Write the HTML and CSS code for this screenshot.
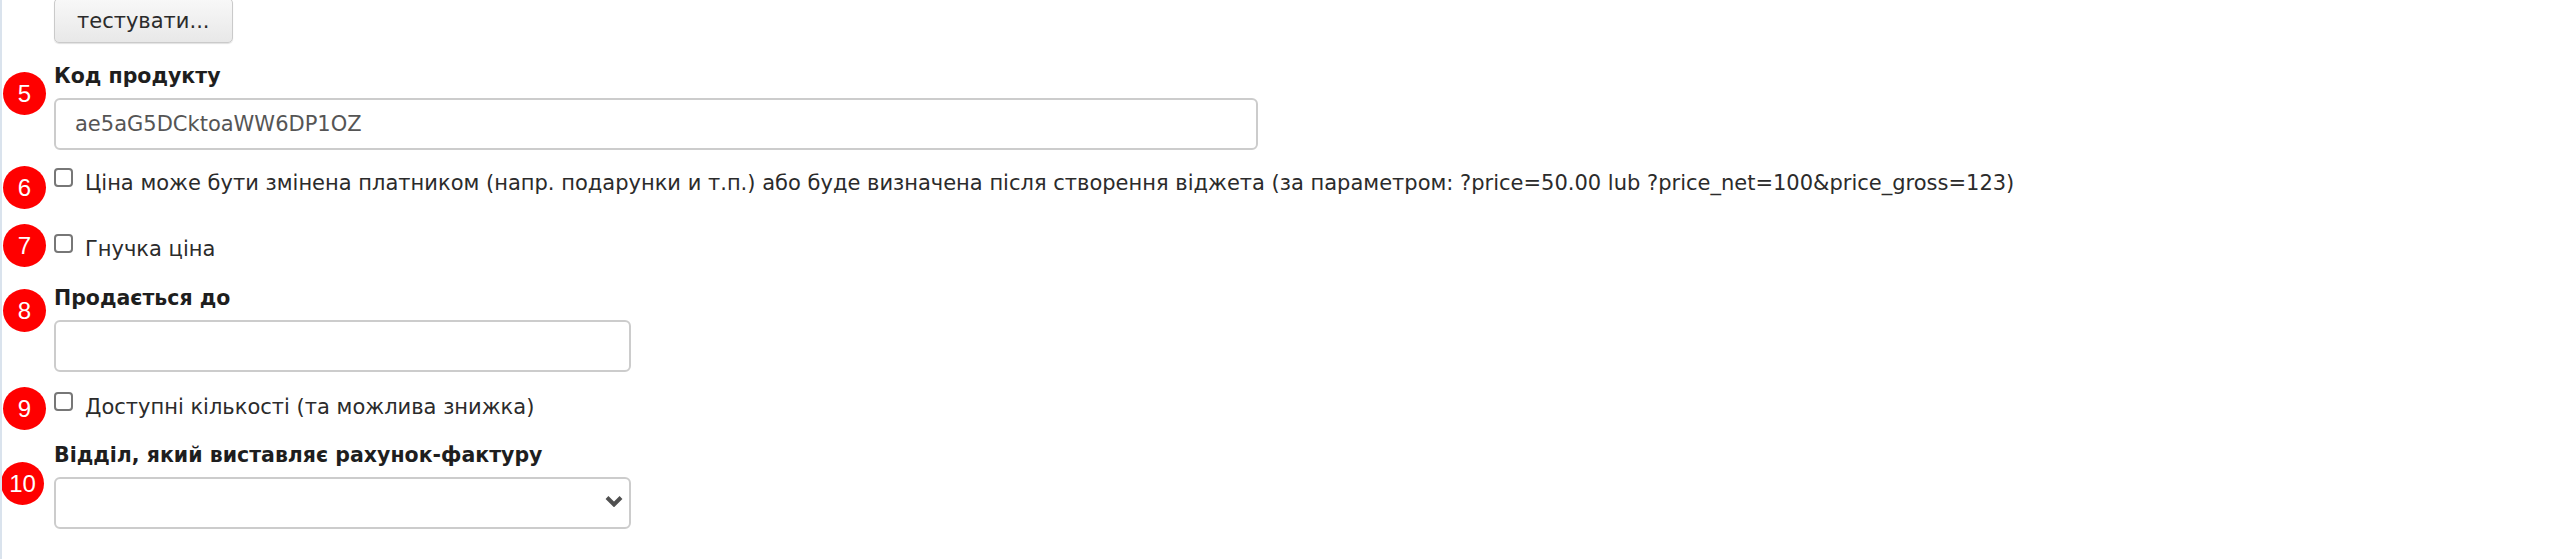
FILE: index.html
```html
<!DOCTYPE html>
<html lang="uk">
<head>
  <meta charset="UTF-8">
  <meta name="viewport" content="width=device-width, initial-scale=1.0">
  <title>Продукт</title>
  <link rel="stylesheet" href="styles.css">
</head>
<body>
  <div class="page">
    <div class="actions">
      <button class="btn" type="button">тестувати...</button>
    </div>

    <div class="row field row-code">
      <span class="badge">5</span>
      <label class="field-label" for="product-code">Код продукту</label>
      <input class="text-input wide" id="product-code" type="text" value="ae5aG5DCktoaWW6DP1OZ">
    </div>

    <div class="row row-price">
      <span class="badge">6</span>
      <label class="check">
        <input type="checkbox">
        <span class="check-text">Ціна може бути змінена платником (напр. подарунки и т.п.) або буде визначена після створення віджета (за параметром: ?price=50.00 lub ?price_net=100&amp;price_gross=123)</span>
      </label>
    </div>

    <div class="row row-flex">
      <span class="badge">7</span>
      <label class="check">
        <input type="checkbox">
        <span class="check-text">Гнучка ціна</span>
      </label>
    </div>

    <div class="row field row-until">
      <span class="badge">8</span>
      <label class="field-label" for="sold-until">Продається до</label>
      <input class="text-input narrow" id="sold-until" type="text">
    </div>

    <div class="row row-qty">
      <span class="badge">9</span>
      <label class="check">
        <input type="checkbox">
        <span class="check-text">Доступні кількості (та можлива знижка)</span>
      </label>
    </div>

    <div class="row field row-dept">
      <span class="badge">10</span>
      <label class="field-label" for="department">Відділ, який виставляє рахунок-фактуру</label>
      <div class="select-wrap narrow">
        <select class="text-input" id="department">
          <option value=""></option>
        </select>
        <svg class="chevron" viewBox="0 0 18 12" aria-hidden="true">
          <polyline points="2,2.5 9,9.5 16,2.5" fill="none" stroke="#505050" stroke-width="4"/>
        </svg>
      </div>
    </div>
  </div>
</body>
</html>
```

FILE: styles.css
```css
* {
  box-sizing: border-box;
}
body {
  margin: 0;
  min-height: 100vh;
  border-left: 2px solid #dae3ed;
  background: #fff;
  color: #2b2b2b;
  font-family: "DejaVu Sans", Verdana, sans-serif;
  font-size: 21px;
  line-height: 24px;
}
.page {
  padding-left: 52px;
}
.actions {
  display: flex;
  margin-top: -2px;
}
.btn {
  height: 45px;
  padding: 0 22px;
  font: inherit;
  color: #2b2b2b;
  border: 1px solid #cacaca;
  border-radius: 5px;
  background: linear-gradient(#f8f8f8, #e8e8e8);
  box-shadow: 0 1px 1px rgba(0, 0, 0, 0.12);
}
.row {
  position: relative;
}
.field-label {
  display: block;
  margin-bottom: 10px;
  font-size: 20.5px;
  font-weight: bold;
  color: #1e1e1e;
}
.text-input {
  display: block;
  width: 100%;
  height: 52px;
  padding: 0 19px;
  border: 2px solid #cccccc;
  border-radius: 6px;
  background: #fff;
  font: inherit;
  color: #555;
}
.wide {
  width: 1204px;
}
.narrow {
  width: 577px;
}
select.text-input {
  appearance: none;
  -webkit-appearance: none;
}
.select-wrap {
  position: relative;
}
.chevron {
  position: absolute;
  right: 8px;
  top: 18px;
  width: 18px;
  height: 12px;
  pointer-events: none;
}
.check {
  display: flex;
  align-items: flex-start;
}
.check input {
  appearance: none;
  -webkit-appearance: none;
  flex: none;
  width: 19px;
  height: 19px;
  margin: 0 12px 0 0;
  border: 2px solid #777;
  border-radius: 4px;
  background: #fff;
}
.check-text {
  margin-top: 3px;
}

/* spacing between rows */
.row-code { margin-top: 21px; }
.row-price { margin-top: 18px; }
.row-flex { margin-top: 39px; }
.row-until { margin-top: 25px; }
.row-qty { margin-top: 20px; }
.row-dept { margin-top: 24px; }

/* numbered red markers */
.badge {
  position: absolute;
  left: -51px;
  display: flex;
  align-items: center;
  justify-content: center;
  width: 43px;
  height: 43px;
  border-radius: 50%;
  background: #ff0000;
  color: #fff;
  font-family: "Liberation Sans", Arial, sans-serif;
  font-size: 24px;
  line-height: 1;
}
.row-code .badge { top: 8px; }
.row-price .badge { top: -2px; }
.row-flex .badge { top: -10px; }
.row-until .badge { top: 3px; }
.row-qty .badge { top: -5px; }
.row-dept .badge { top: 19px; left: -53px; }
```
